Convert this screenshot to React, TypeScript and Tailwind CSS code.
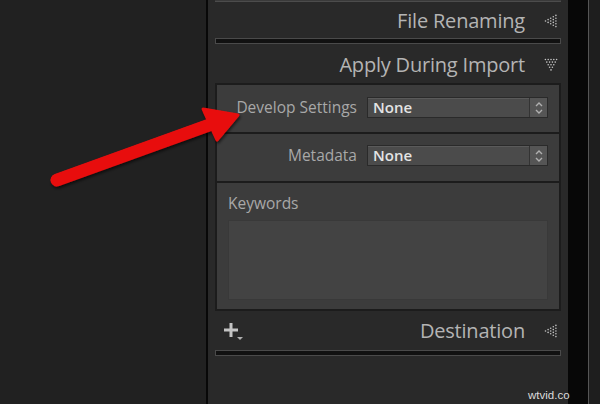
import React from "react";

const font = { fontFamily: '"Open Sans", "Liberation Sans", sans-serif' };

function LeftTriangle() {
  // dotted triangle pointing left (collapsed), checkerboard dots
  const dots: [number, number][] = [];
  [1, 2, 3, 4, 5].forEach((n, i) => {
    for (let j = 0; j < n; j++) {
      dots.push([1.5 + i * 2.6, 7 + (j - (n - 1) / 2) * 2.8]);
    }
  });
  return (
    <svg width="14" height="14" viewBox="0 0 14 14">
      {dots.map(([x, y], k) => (
        <circle key={k} cx={x} cy={y} r="0.8" fill="#c4c4c4" />
      ))}
    </svg>
  );
}

function DownTriangle() {
  const dots: [number, number][] = [];
  [5, 4, 3, 2, 1].forEach((n, i) => {
    for (let j = 0; j < n; j++) {
      dots.push([7 + (j - (n - 1) / 2) * 2.8, 1.5 + i * 2.6]);
    }
  });
  return (
    <svg width="14" height="14" viewBox="0 0 14 14">
      {dots.map(([x, y], k) => (
        <circle key={k} cx={x} cy={y} r="0.8" fill="#c4c4c4" />
      ))}
    </svg>
  );
}

function Header({ title, open }: { title: string; open?: boolean }) {
  return (
    <div className="flex items-center justify-end h-full pr-[3px]">
      <span className="text-[20px] text-[#b4b4b4] leading-none tracking-[-0.2px]" style={font}>
        {title}
      </span>
      <span className="w-[33px] flex justify-end">{open ? <DownTriangle /> : <LeftTriangle />}</span>
    </div>
  );
}

function Groove() {
  return (
    <div className="h-[6px] border-t border-b border-[#4a4a4a] bg-[#111111] border-x" />
  );
}

function Select({ value }: { value: string }) {
  return (
    <div className="flex h-[21px] w-[181px] border border-[#2a2a2a] bg-[#4b4b4b] shadow-[inset_0_1px_0_#5a5a5a]">
      <span className="flex-1 pl-[5px] text-[15px] leading-[19px] font-semibold text-[#e4e4e4]" style={font}>
        {value}
      </span>
      <span className="w-[18px] border-l border-[#333] bg-[#555] flex flex-col items-center justify-center gap-[2px]">
        <svg width="8" height="5" viewBox="0 0 8 5">
          <path d="M1 4 L4 1 L7 4" fill="none" stroke="#b0b0b0" strokeWidth="1.4" />
        </svg>
        <svg width="8" height="5" viewBox="0 0 8 5">
          <path d="M1 1 L4 4 L7 1" fill="none" stroke="#b0b0b0" strokeWidth="1.4" />
        </svg>
      </span>
    </div>
  );
}

function Row({ label, value, pt }: { label: string; value: string; pt: string }) {
  return (
    <div className={`flex items-start h-[49px] ${pt} border-b-2 border-[#1c1c1c]`}>
      <span className="w-[140px] text-right text-[15.5px] leading-[21px] text-[#a8a8a8]" style={font}>
        {label}
      </span>
      <span className="w-[10px]" />
      <Select value={value} />
    </div>
  );
}

export default function App() {
  return (
    <div className="relative flex w-[600px] h-[404px] overflow-hidden bg-[#222222]">
      {/* left area */}
      <div className="w-[206px] bg-[#212121]" />
      <div className="w-[2px] bg-[#080808]" />

      {/* panel */}
      <div className="relative w-[360px] bg-[#292929] px-[7px] flex flex-col">
        <div className="h-[2px] bg-[#3a3a3a] border-b border-[#4c4c4c]" />
        <div className="h-[36px] pt-[1px]">
          <Header title="File Renaming" />
        </div>
        <Groove />
        <div className="h-[39px] pt-[3px]">
          <Header title="Apply During Import" open />
        </div>

        {/* settings box */}
        <div className="h-[228px] border-2 border-[#1c1c1c] bg-[#3c3c3c] flex flex-col">
          <Row label="Develop Settings" value="None" pt="pt-[12px]" />
          <Row label="Metadata" value="None" pt="pt-[11px]" />
          <div className="flex-1 flex flex-col px-[11px] pt-[10px] pb-[9px]">
            <span className="text-[15.5px] text-[#a8a8a8] leading-[20px]" style={font}>
              Keywords
            </span>
            <div className="mt-[7px] flex-1 bg-[#434343] border border-[#393939]" />
          </div>
        </div>

        <div className="h-[39px] flex items-center">
          <div className="relative w-[26px] h-[20px] ml-[7px]">
            <svg width="26" height="20" viewBox="0 0 26 20">
              <path d="M9 2 V16 M2 9 H16" stroke="#c4c4c4" strokeWidth="3" />
              <path d="M15 16 L21 16 L18 19 Z" fill="#b0b0b0" />
            </svg>
          </div>
          <div className="flex-1 h-full">
            <Header title="Destination" />
          </div>
        </div>
        <Groove />
        <div className="flex-1" />

        {/* watermark */}
        <span
          className="absolute left-[320px] top-[387px] text-[11.5px] text-[#dcdcdc] whitespace-nowrap"
          style={{ fontFamily: '"Liberation Sans", sans-serif' }}
        >
          wtvid.co
        </span>
      </div>

      {/* right strips */}
      <div className="w-[20px] bg-[#070707]" />
      <div className="w-[1px] bg-[#555555]" />
      <div className="flex-1 bg-[#1e1e1e]" />

      {/* red arrow overlay */}
      <svg className="absolute left-0 top-0" width="600" height="404" viewBox="0 0 600 404">
        <defs>
          <filter id="sh" x="-10%" y="-10%" width="120%" height="130%">
            <feDropShadow dx="1" dy="2" stdDeviation="1.5" floodColor="#000" floodOpacity="0.6" />
          </filter>
        </defs>
        <g filter="url(#sh)">
          <line x1="57" y1="180" x2="212" y2="124" stroke="#e80f0f" strokeWidth="13" strokeLinecap="round" />
          <polygon points="203,109 238,115 217,140" fill="#e80f0f" strokeLinejoin="round" stroke="#e80f0f" strokeWidth="3" />
        </g>
      </svg>
    </div>
  );
}
